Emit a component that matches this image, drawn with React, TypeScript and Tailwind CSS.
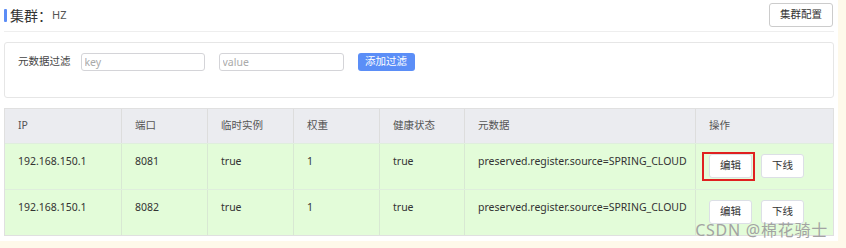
const font = { fontFamily: '"Noto Sans", "Noto Sans CJK SC", sans-serif' };

const headers = ["IP", "端口", "临时实例", "权重", "健康状态", "元数据", "操作"];
const widths = ["w-[117px]", "w-[86px]", "w-[86px]", "w-[86px]", "w-[85px]", "w-[231px]", "flex-1"];

const rows = [
  { ip: "192.168.150.1", port: "8081", ephemeral: "true", weight: "1", healthy: "true", highlight: true },
  { ip: "192.168.150.1", port: "8082", ephemeral: "true", weight: "1", healthy: "true", highlight: false },
];

function SmallButton({ label }: { label: string }) {
  return (
    <button className="h-[24px] w-[43px] rounded-[3px] border border-[#dcdfe6] bg-white text-[10.5px] text-[#333]">
      {label}
    </button>
  );
}

export default function App() {
  return (
    <div className="relative flex h-[248px] w-[846px] bg-[#fef9ea] text-[10.5px] text-[#333]" style={font}>
      <div className="flex h-[241px] w-[838px] flex-col bg-white px-[4px]">
        {/* header */}
        <div className="flex h-[32px] items-center justify-between border-b border-[#eeeeee] pr-[1px]">
          <div className="flex items-center">
            <span className="h-[13px] w-[3px] rounded-[1px] bg-[#5c8df6]" />
            <span className="ml-[3px] text-[14px] text-[#333]">集群：</span>
            <span className="text-[11px] text-[#555]">HZ</span>
          </div>
          <button className="mb-[2px] h-[24px] w-[64px] rounded-[3px] border border-[#ccc] bg-white text-[10.5px] text-[#333]">
            集群配置
          </button>
        </div>

        {/* filter */}
        <div className="mt-[10px] flex h-[56px] w-[830px] items-start rounded-[3px] border border-[#e6e6e6] pl-[13px] pt-[10px]">
          <span className="mt-[1px] text-[10.5px] text-[#444]">元数据过滤</span>
          <input
            placeholder="key"
            className="ml-[10px] h-[18px] w-[124px] rounded-[3px] border border-[#d4d4d8] px-[3px] text-[10.5px] placeholder:text-[#aaa]"
          />
          <input
            placeholder="value"
            className="ml-[14px] h-[18px] w-[125px] rounded-[3px] border border-[#d4d4d8] px-[3px] text-[10.5px] placeholder:text-[#aaa]"
          />
          <button className="ml-[14px] h-[18px] w-[57px] rounded-[3px] bg-[#5b8ef7] text-[10.5px] text-white">
            添加过滤
          </button>
        </div>

        {/* table */}
        <div className="mt-[10px] flex w-[830px] flex-col border border-[#e0e0e0]">
          <div className="flex h-[34px] bg-[#ebecf0]">
            {headers.map((h, i) => (
              <div
                key={h}
                className={`${widths[i]} flex items-center border-r border-[#dddddd] pl-[13px] text-[10.5px] text-[#555] last:border-r-0`}
              >
                {h}
              </div>
            ))}
          </div>
          {rows.map((r) => {
            const cells = [r.ip, r.port, r.ephemeral, r.weight, r.healthy, "preserved.register.source=SPRING_CLOUD"];
            return (
              <div key={r.port} className="flex h-[46px] border-t border-[#dfeedd] bg-[#e3fcd9]">
                {cells.map((c, i) => (
                  <div
                    key={i}
                    className={`${widths[i]} flex items-start border-r border-[#d8e8d3] pl-[13px] pt-[10px] text-[10.5px] text-[#333]`}
                  >
                    {c}
                  </div>
                ))}
                <div className="flex flex-1 items-start gap-[9px] pl-[13px] pt-[10px]">
                  <div className="relative">
                    <SmallButton label="编辑" />
                    {r.highlight && (
                      <span className="absolute -bottom-[3px] -left-[7px] -right-[3px] -top-[2px] border-2 border-[#e02020]" />
                    )}
                  </div>
                  <SmallButton label="下线" />
                </div>
              </div>
            );
          })}
        </div>
      </div>
      <span className="pointer-events-none absolute right-[18px] top-[220px] text-[16px] leading-[20px] tracking-[0.75px] text-[#a3a3a3]">
        CSDN @棉花骑士
      </span>
    </div>
  );
}
